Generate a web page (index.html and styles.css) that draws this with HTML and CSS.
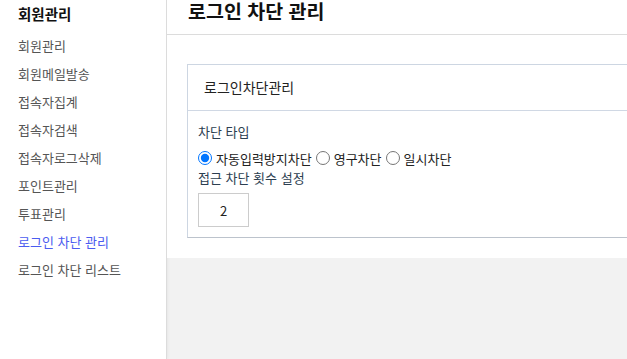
FILE: index.html
```html
<!DOCTYPE html>
<html lang="ko">
<head>
  <meta charset="UTF-8" />
  <title>로그인 차단 관리</title>
  <link rel="stylesheet" href="styles.css">
</head>
<body>
  <div class="layout">

    <!-- Sidebar -->
    <aside class="sidebar">
      <h2 class="side-title">회원관리</h2>
      <ul class="side-menu">
        <li><a href="#">회원관리</a></li>
        <li><a href="#">회원메일발송</a></li>
        <li><a href="#">접속자집계</a></li>
        <li><a href="#">접속자검색</a></li>
        <li><a href="#">접속자로그삭제</a></li>
        <li><a href="#">포인트관리</a></li>
        <li><a href="#">투표관리</a></li>
        <li><a href="#" class="active">로그인 차단 관리</a></li>
        <li><a href="#">로그인 차단 리스트</a></li>
      </ul>
    </aside>

    <!-- Main -->
    <main class="main">
      <div class="page-header">
        <h1>로그인 차단 관리</h1>
      </div>

      <div class="content">
        <section class="card">
          <div class="card-header">로그인차단관리</div>
          <div class="card-body">
            <div class="field-label">차단 타입</div>
            <div class="radio-row">
              <label><input type="radio" name="type" checked> 자동입력방지차단</label>
              <label><input type="radio" name="type"> 영구차단</label>
              <label><input type="radio" name="type"> 일시차단</label>
            </div>
            <div class="field-label">접근 차단 횟수 설정</div>
            <input type="text" class="count-input" value="2">
          </div>
        </section>
      </div>
    </main>

  </div>
</body>
</html>
```

FILE: styles.css
```css
* {
  box-sizing: border-box;
  margin: 0;
  padding: 0;
}

body {
  font-family: "Noto Sans CJK KR", "Noto Sans", sans-serif;
  background-color: #f2f2f2;
  color: #333;
  overflow: hidden;
}

.layout {
  display: flex;
  min-height: 100vh;
}

/* Sidebar */
.sidebar {
  width: 167px;
  flex-shrink: 0;
  background: white;
  border-right: 1px solid #dcdcdc;
  box-shadow: 1px 0 3px rgba(0,0,0,0.05);
  padding: 3px 0 0 18px;
}

.side-title {
  font-size: 14.5px;
  font-weight: 700;
  line-height: 22px;
  color: #111;
}

.side-menu {
  list-style: none;
  margin-top: 7px;
}

.side-menu a {
  display: block;
  font-size: 13px;
  line-height: 28px;
  color: #555;
  text-decoration: none;
}

.side-menu a.active {
  color: #4b5cf0;
}

/* Main */
.main {
  flex: 1;
  min-width: 0;
}

.page-header {
  background: white;
  height: 35px;
  border-bottom: 1px solid #dcdcdc;
  padding-left: 21px;
}

.page-header h1 {
  font-size: 19.5px;
  font-weight: 700;
  line-height: 22px;
  color: #111;
}

.content {
  background: white;
  padding: 29px 0 20px 20px;
}

.card {
  width: 620px;
  border: 1px solid #cdd6e2;
  border-bottom-color: #bcc3cc;
}

.card-header {
  height: 46px;
  border-bottom: 1px solid #d0d8e4;
  padding-left: 16px;
  font-size: 14px;
  line-height: 45px;
  color: #222;
}

.card-body {
  padding: 12px 10px 10px;
}

.field-label {
  font-size: 13px;
  line-height: 18px;
  color: #2c3e50;
}

.radio-row {
  display: flex;
  height: 20px;
  align-items: center;
  margin: 7px 0 1px;
  font-size: 13px;
  color: #222;
}

.radio-row label {
  display: flex;
  align-items: center;
  gap: 4px;
  margin-right: 4px;
}

.radio-row input {
  width: 14px;
  height: 14px;
  margin: 0;
}

.count-input {
  display: block;
  margin-top: 6px;
  width: 51px;
  height: 34px;
  border: 1px solid #ccc;
  font-family: inherit;
  font-size: 13px;
  text-align: center;
  color: #222;
}
```
